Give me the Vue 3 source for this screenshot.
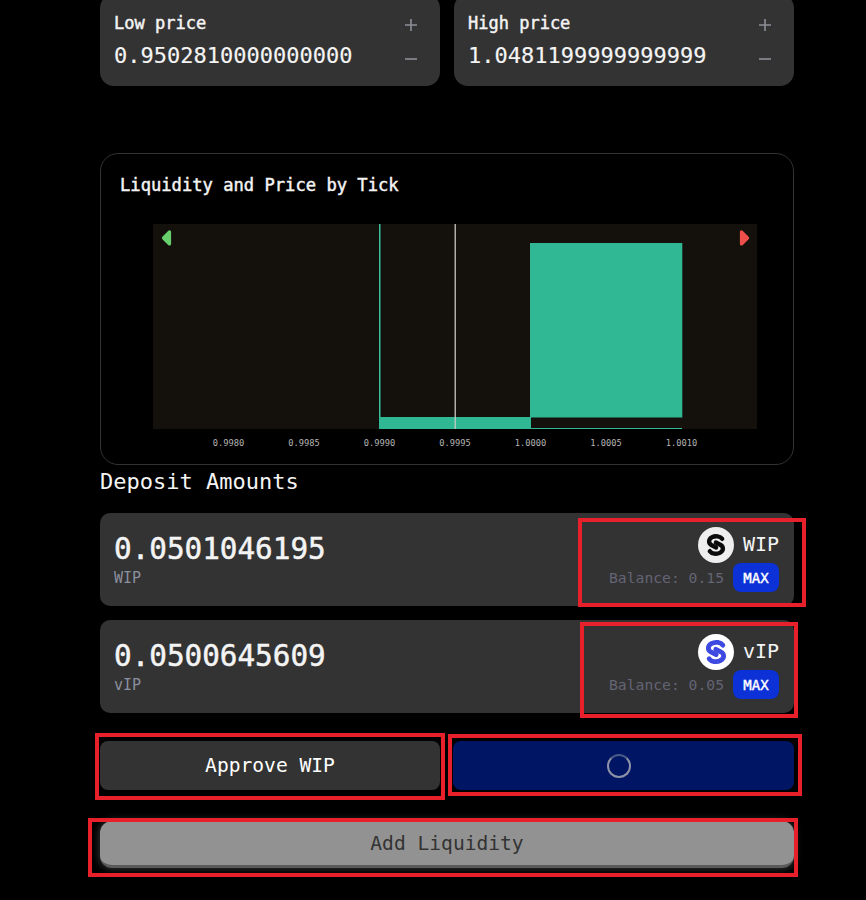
<script setup>
const ranges = [
  { label: 'Low price', value: '0.9502810000000000' },
  { label: 'High price', value: '1.0481199999999999' }
]
const ticks = [
  { x: 228.5, t: '0.9980' }, { x: 304, t: '0.9985' }, { x: 379.5, t: '0.9990' }, { x: 455, t: '0.9995' },
  { x: 530.5, t: '1.0000' }, { x: 606, t: '1.0005' }, { x: 681.5, t: '1.0010' }
]
const deposits = [
  { amount: '0.0501046195', sym: 'WIP', bal: '0.15', bg: '#eeeeee', fg: '#0b0b0b', sw: 4.6, t: 'translate(18 18) scale(.95) translate(-18 -18)' },
  { amount: '0.0500645609', sym: 'vIP', bal: '0.05', bg: '#ffffff', fg: '#3d49e0', sw: 4.6, t: 'translate(18 18) scale(1.05) translate(-18 -18)' }
]
const marks = [
  { left: 578, top: 518, width: 228, height: 89 },
  { left: 580, top: 622, width: 218, height: 96 },
  { left: 95, top: 733, width: 350, height: 67 },
  { left: 448, top: 734, width: 354, height: 62 },
  { left: 88, top: 818, width: 710, height: 59 }
]
function px(m) {
  return { left: m.left + 'px', top: m.top + 'px', width: m.width + 'px', height: m.height + 'px' }
}
</script>

<template>
  <div class="page">
    <section class="ranges">
      <div v-for="r in ranges" :key="r.label" class="range">
        <div class="range-text">
          <div class="range-label">{{ r.label }}</div>
          <div class="range-value">{{ r.value }}</div>
        </div>
        <div class="steppers">
          <svg width="14" height="14" viewBox="0 0 14 14"><path d="M7 1v12M1 7h12" /></svg>
          <svg width="14" height="14" viewBox="0 0 14 14"><path d="M1 7h12" /></svg>
        </div>
      </div>
    </section>

    <section class="chart">
      <h3 class="chart-title">Liquidity and Price by Tick</h3>
      <svg class="plot" width="692" height="240" viewBox="101 214 692 240">
        <rect x="153" y="224" width="604" height="205" fill="#14110d" />
        <rect x="379" y="224" width="1.5" height="193" fill="#3abf9c" />
        <rect x="379" y="417" width="152" height="12" fill="#2fb893" />
        <rect x="530" y="243" width="152.3" height="174.5" fill="#2fb893" />
        <rect x="530" y="428" width="152" height="1" fill="#2fb893" />
        <rect x="454.5" y="224" width="1.5" height="205" fill="#c9c9c4" opacity="0.85" />
        <polygon points="169.5,232 169.5,244 163.5,238" fill="#67cf6c" stroke="#67cf6c" stroke-width="3.2" stroke-linejoin="round" />
        <polygon points="741.5,232 741.5,244 747.5,238" fill="#ee4f4b" stroke="#ee4f4b" stroke-width="3.2" stroke-linejoin="round" />
        <text v-for="k in ticks" :key="k.x" :x="k.x" y="446" class="tick">{{ k.t }}</text>
      </svg>
    </section>

    <h2 class="heading">Deposit Amounts</h2>

    <section class="deposits">
      <div v-for="d in deposits" :key="d.sym" class="deposit">
        <div class="amount-col">
          <div class="amount">{{ d.amount }}</div>
          <div class="amount-sym">{{ d.sym }}</div>
        </div>
        <div class="token-col">
          <div class="token">
            <svg width="36" height="36" viewBox="0 0 36 36">
              <circle cx="18" cy="18" r="18" :fill="d.bg" />
              <g :transform="d.t" fill="none" :stroke="d.fg" :stroke-width="d.sw" stroke-linecap="round">
                <path d="M24.5 11.5C22.5 8.7 17.5 7.8 13.5 10c-3.6 2-3.6 6.2-.4 8l5 2.6" />
                <path d="M11.5 24.5c2 2.8 7 3.7 11 1.5 3.6-2 3.6-6.2.4-8l-5-2.6" />
              </g>
            </svg>
            <span class="token-name">{{ d.sym }}</span>
          </div>
          <div class="balance-row">
            <span class="balance">Balance: {{ d.bal }}</span>
            <button class="max">MAX</button>
          </div>
        </div>
      </div>
    </section>

    <section class="actions">
      <button class="action approve">Approve WIP</button>
      <button class="action loading"><span class="spinner"></span></button>
    </section>

    <button class="add">Add Liquidity</button>

    <div v-for="(m, i) in marks" :key="i" class="mark" :style="px(m)"></div>
  </div>
</template>

<style>
html, body { margin: 0; background: #000; }
</style>

<style scoped>
.page {
  position: relative;
  width: 866px;
  height: 900px;
  overflow: hidden;
  box-sizing: border-box;
  padding: 0 72px 0 100px;
  background: #000;
  color: #f4f4f4;
  font-family: "DejaVu Sans Mono", "Liberation Mono", monospace;
}
.ranges {
  display: grid;
  grid-template-columns: 1fr 1fr;
  gap: 14px;
  margin-top: -6px;
}
.range {
  display: flex;
  justify-content: space-between;
  height: 92px;
  box-sizing: border-box;
  padding: 18px 22px 0 14px;
  background: #333;
  border-radius: 14px;
}
.range-label { font-size: 17px; font-weight: 400; line-height: 22px; -webkit-text-stroke: 0.45px currentColor; }
.range-value { font-size: 22px; line-height: 28px; margin-top: 8px; -webkit-text-stroke: 0.15px currentColor; }
.steppers {
  display: flex;
  flex-direction: column;
  gap: 20px;
  padding-top: 6px;
}
.steppers svg { display: block; }
.steppers path { stroke: #8e8e9a; stroke-width: 1.6; fill: none; }
.chart {
  margin-top: 67px;
  height: 312px;
  box-sizing: border-box;
  border: 1px solid #333;
  border-radius: 18px;
  padding: 19px 0 0 19px;
}
.chart-title { margin: 0; font-size: 17.15px; line-height: 24px; font-weight: 400; -webkit-text-stroke: 0.45px currentColor; }
.plot { display: block; margin: 17px 0 0 -19px; }
.tick {
  font-size: 8.7px;
  fill: #b4b4b4;
  text-anchor: middle;
  font-family: "DejaVu Sans Mono", monospace;
}
.heading { margin: 2px 0 0; font-size: 22px; line-height: 30px; font-weight: 400; }
.deposits { display: flex; flex-direction: column; gap: 14px; margin-top: 16px; }
.deposit {
  display: flex;
  justify-content: space-between;
  height: 93px;
  box-sizing: border-box;
  padding: 14px 15px 0 14px;
  background: #333;
  border-radius: 10px;
}
.amount-col { padding-top: 4px; }
.amount { font-size: 29.3px; line-height: 36px; font-weight: 400; -webkit-text-stroke: 0.5px currentColor; }
.amount-sym { font-size: 15px; line-height: 18px; margin-top: 2px; color: #8b8f9f; }
.token-col { display: flex; flex-direction: column; align-items: flex-end; }
.token { display: flex; align-items: center; gap: 9px; }
.token svg { display: block; }
.token-name { font-size: 20px; line-height: 34px; padding-bottom: 2px; }
.balance-row { display: flex; align-items: center; gap: 9px; }
.balance { font-size: 14.7px; color: #636474; }
.max {
  width: 46px;
  height: 29px;
  padding: 0;
  border: 0;
  border-radius: 8px;
  background: #0c31d6;
  color: #fff;
  font: 400 14px "DejaVu Sans Mono", monospace;
  -webkit-text-stroke: 0.4px #fff;
}
.actions {
  display: grid;
  grid-template-columns: 340px 341px;
  gap: 13px;
  margin-top: 28px;
}
.action {
  display: flex;
  align-items: center;
  justify-content: center;
  height: 49px;
  padding: 0;
  border: 0;
  border-radius: 8px;
  font: 400 19.6px "DejaVu Sans Mono", monospace;
}
.approve { background: #333; color: #fff; }
.loading { background: #001664; padding-right: 9px; }
.spinner {
  width: 20px;
  height: 20px;
  border: 2px solid #8f93a8;
  border-top-color: #4a5a86;
  border-radius: 50%;
}
.add {
  display: block;
  width: 694px;
  height: 47px;
  margin-top: 31px;
  padding: 0;
  border: 0;
  border-bottom: 3px solid #5a5a5a;
  border-radius: 12px;
  background: #929292;
  color: #333;
  font: 400 19.6px "DejaVu Sans Mono", monospace;
  box-shadow: 0 0 8px rgba(255, 255, 255, 0.25);
}
.mark {
  position: absolute;
  box-sizing: border-box;
  border: 4px solid #e8202b;
  pointer-events: none;
}
</style>
